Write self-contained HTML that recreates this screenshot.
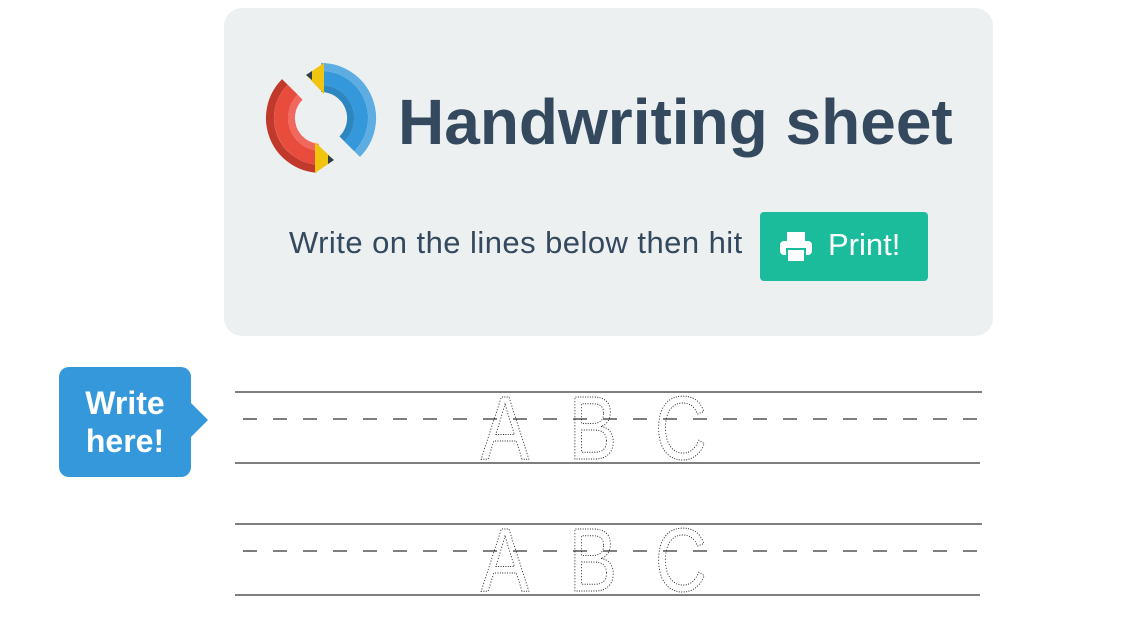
<!DOCTYPE html>
<html><head><meta charset="utf-8"><style>
body{margin:0;width:1137px;height:617px;background:#fff;position:relative;overflow:hidden;font-family:"Liberation Sans",sans-serif}
.card{position:absolute;left:224px;top:8px;width:769px;height:328px;background:#ecf0f1;border-radius:18px}
.title{position:absolute;left:398px;top:85px;font-size:64px;font-weight:bold;color:#34495e;letter-spacing:0px;white-space:nowrap}
.sub{position:absolute;left:289px;top:225px;font-size:31px;color:#34495e;white-space:nowrap;letter-spacing:0.45px}
.btn{position:absolute;left:760px;top:212px;width:168px;height:69px;background:#1abc9c;border-radius:4px;color:#fff;font-size:31px}
.btn span{position:absolute;left:68px;top:15px}
.bub{position:absolute;left:59px;top:367px;width:132px;height:110px;background:#3498db;border-radius:10px;color:#fff;font-weight:bold;font-size:32px;text-align:center;line-height:38px}
.bub:after{content:"";position:absolute;right:-17px;top:36px;border-left:17px solid #3498db;border-top:17px solid transparent;border-bottom:17px solid transparent}
</style></head><body>
<div class="card">
<svg style="position:absolute;left:40px;top:52px" width="120" height="120" viewBox="0 0 120 120" fill="none">
<path d="M20.9 21.9 A51 51 0 0 0 52.6 108.8" stroke="#c0392b" stroke-width="8"/>
<path d="M28.7 29.7 A40 40 0 0 0 53.5 97.8" stroke="#e74c3c" stroke-width="14"/>
<path d="M36.1 37.1 A29.5 29.5 0 0 0 54.4 87.4" stroke="#f1685c" stroke-width="7"/>
<path d="M51 113 L51 82 L70 100 Z" fill="#f1c40f"/>
<path d="M64 95 L70 100 L64 104 Z" fill="#2c3e50"/>
<path d="M57 7 A51 51 0 0 1 93.1 94.1" stroke="#5dade2" stroke-width="8"/>
<path d="M57 18 A40 40 0 0 1 85.3 86.3" stroke="#3498db" stroke-width="14"/>
<path d="M57 28.5 A29.5 29.5 0 0 1 77.9 78.9" stroke="#2e86c1" stroke-width="7"/>
<path d="M60 3 L60 34 L42 15 Z" fill="#f1c40f"/>
<path d="M42 15 L48 11 L48 20 Z" fill="#2c3e50"/>
</svg>
</div>
<div class="title">Handwriting sheet</div>
<div class="sub">Write on the lines below then hit</div>
<div class="btn"><svg style="position:absolute;left:20px;top:20px" width="32" height="30" viewBox="0 0 32 30"><rect x="7" y="0" width="18" height="9" fill="#fff"/><rect x="0" y="9" width="32" height="14" rx="4" fill="#fff"/><rect x="7" y="17" width="18" height="13" fill="#fff" stroke="#1abc9c" stroke-width="2"/></svg><span>Print!</span></div>
<div class="bub"><div style="padding-top:17px">Write<br>here!</div></div>
<svg style="position:absolute;left:0;top:0" width="1137" height="617">
<g stroke="#333" stroke-width="1.3">
<line x1="235" y1="392" x2="982" y2="392"/><line x1="235" y1="463" x2="980" y2="463"/>
<line x1="235" y1="419" x2="982" y2="419" stroke-dasharray="14 16" stroke-dashoffset="-8"/>
<line x1="235" y1="524" x2="982" y2="524"/><line x1="235" y1="595" x2="980" y2="595"/>
<line x1="235" y1="551" x2="982" y2="551" stroke-dasharray="14 16" stroke-dashoffset="-8"/>
</g>
<g font-family="Liberation Sans,sans-serif" font-size="90" fill="none" stroke="#222" stroke-width="1" stroke-dasharray="1.2 1.8">
<text transform="translate(481 459) scale(0.8 1)">A</text><text transform="translate(569 459) scale(0.8 1)">B</text><text transform="translate(655 459) scale(0.8 1)">C</text>
<text transform="translate(481 591) scale(0.8 1)">A</text><text transform="translate(569 591) scale(0.8 1)">B</text><text transform="translate(655 591) scale(0.8 1)">C</text>
</g>
</svg>
</body></html>
